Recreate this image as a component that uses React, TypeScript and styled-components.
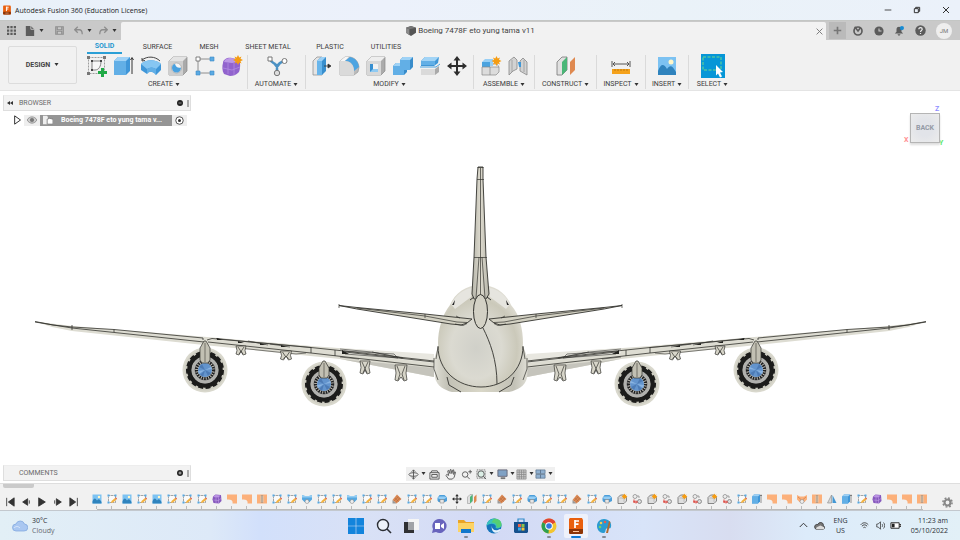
import React from 'react';
import styled, { createGlobalStyle, css } from 'styled-components';

const GlobalStyle = createGlobalStyle`
  *, *::before, *::after { box-sizing: border-box; }
  html, body { margin: 0; padding: 0; }
  body { font-family: Roboto, "Liberation Sans", Arial, sans-serif; font-size: 7px; line-height: 9px; color: #3c3c3c; background: #fff; }
  button { font: inherit; color: inherit; border: 0; padding: 0; margin: 0; background: none; cursor: pointer; }
  h1, h2, p, ul, ol { margin: 0; padding: 0; font: inherit; list-style: none; }
  svg { display: block; }
`;

/* ---------- window shell ---------- */

const Shell = styled.div`
  min-height: 100vh;
  display: flex;
  flex-direction: column;
`;

const TitleBar = styled.header`
  display: flex;
  align-items: center;
  height: 20px;
  padding-left: 2px;
  gap: 3px;
  background: linear-gradient(90deg, #e9f1f9, #ecf1fb 40%, #eaf2f8 70%, #ebf1fa);
  color: #1b1b1b;
  font-family: "Open Sans", "Noto Sans", sans-serif;
`;

const AppTitle = styled.h1`
  flex: 1;
`;

const WindowButtons = styled.div`
  display: flex;
`;

const WindowButton = styled.button`
  width: 29px;
  height: 20px;
  display: grid;
  place-items: center;
`;

const TabStrip = styled.div`
  display: flex;
  align-items: flex-end;
  height: 20px;
  background: #c9c9c9;
  border-top: 1px solid #c4c6c4;
`;

const QuickBar = styled.div`
  width: 121px;
  height: 19px;
  display: flex;
  align-items: center;
  padding-left: 3px;
`;

const QuickButton = styled.button<{ $w: number; $dim?: boolean }>`
  width: ${(p) => p.$w}px;
  height: 17px;
  display: flex;
  align-items: center;
  justify-content: center;
  gap: 4px;
  color: ${(p) => (p.$dim ? '#8d8d8d' : '#5c5c5c')};
`;

const DocumentTab = styled.div`
  flex: 1;
  height: 18px;
  display: flex;
  align-items: center;
  background: #f2f2f2;
  border-radius: 2px 2px 0 0;
`;

const DocumentName = styled.div`
  flex: 1;
  display: flex;
  align-items: center;
  justify-content: center;
  gap: 2px;
  padding-left: 8px;
  font-size: 8px;
  line-height: 10px;
  color: #444;
`;

const CloseTab = styled.button`
  width: 14px;
  height: 16px;
  display: grid;
  place-items: center;
  color: #777;
`;

const AccountBar = styled.div`
  display: flex;
  align-items: center;
  width: 134px;
  height: 19px;
  padding-left: 3px;
`;

const AccountButton = styled.button<{ $w: number; $tab?: boolean }>`
  width: ${(p) => p.$w}px;
  height: 17px;
  display: grid;
  place-items: center;
  color: #5b5b5b;
  background: ${(p) => (p.$tab ? '#bababa' : 'transparent')};
`;

const Avatar = styled.button`
  width: 16px;
  height: 16px;
  margin-left: 6px;
  border-radius: 50%;
  background: #eee;
  color: #777;
  font-size: 6px;
  line-height: 16px;
  text-align: center;
`;

/* ---------- ribbon ---------- */

const Ribbon = styled.section`
  display: flex;
  background: #f1f1f1;
  border-bottom: 1px solid #e4e4e4;
  height: 51px;
  padding-left: 8px;
`;

const WorkspaceButton = styled.button`
  width: 69px;
  height: 38px;
  margin-top: 6px;
  border: 1px solid #dcdcdc;
  border-radius: 2px;
  display: flex;
  align-items: center;
  justify-content: center;
  gap: 4px;
  font-weight: 700;
  color: #444;
`;

const RibbonBody = styled.div`
  flex: 1;
  padding-left: 4px;
`;

const RibbonTabs = styled.div`
  display: flex;
  height: 14px;
  padding-left: 6px;
`;

const RibbonTab = styled.button<{ $w: number; $active?: boolean }>`
  width: ${(p) => p.$w}px;
  height: 14px;
  text-align: center;
  ${(p) =>
    p.$active &&
    css`
      color: #1f97cf;
      font-weight: 700;
      border-bottom: 2px solid #2a9fd6;
    `}
`;

const Groups = styled.div`
  display: flex;
`;

const Group = styled.div<{ $w: number }>`
  width: ${(p) => p.$w}px;
  margin-top: 1px;
  height: 34px;
  display: flex;
  flex-direction: column;
  align-items: center;
  & + & {
    border-left: 1px solid #dadada;
  }
`;

const GroupTools = styled.div`
  display: flex;
`;

const ToolButton = styled.button<{ $selected?: boolean }>`
  width: ${(p) => (p.$selected ? 24 : 27)}px;
  height: 24px;
  margin-top: -1px;
  display: grid;
  place-items: center;
  background: ${(p) => (p.$selected ? '#0696d7' : 'transparent')};
`;

const GroupLabel = styled.button`
  display: flex;
  align-items: center;
  gap: 2px;
  height: 9px;
  white-space: nowrap;
  margin-top: auto;
`;

/* ---------- canvas ---------- */

const Viewport = styled.main`
  flex: 1;
  position: relative;
  display: flex;
  flex-direction: column;
  justify-content: space-between;
  padding: 4px 3px 2px;
  background: #fff;
`;

const ModelLayer = styled.svg`
  position: absolute;
  inset: 0;
  width: 100%;
  height: 100%;
`;

const Browser = styled.aside`
  position: relative;
  width: 188px;
`;

const PanelHead = styled.div`
  position: relative;
  width: 188px;
  height: 16px;
  display: flex;
  align-items: center;
  padding: 0 1px 0 3px;
  background: #f2f2f2;
  border: 1px solid #dedede;
  border-top-color: #ededed;
  color: #6a6a6a;
`;

const PanelTitle = styled.h2`
  flex: 1;
  padding-left: 5px;
`;

const PanelArrow = styled.button`
  width: 7px;
`;

const PanelToggle = styled.button`
  width: 8px;
  height: 12px;
  display: grid;
  place-items: center;
  margin-right: 3px;
`;

const Grip = styled.span`
  width: 2px;
  height: 7px;
  border: 1px solid #aaa;
  border-width: 0 1px;
`;

const TreeRow = styled.div`
  display: flex;
  align-items: center;
  height: 12px;
  margin: 3px 0 0 8px;
`;

const TreeButton = styled.button<{ $w: number; $shade?: boolean }>`
  width: ${(p) => p.$w}px;
  height: 11px;
  display: grid;
  place-items: center;
  background: ${(p) => (p.$shade ? '#eee' : 'transparent')};
`;

const TreeItem = styled.button`
  width: 132px;
  height: 11px;
  display: flex;
  align-items: center;
  gap: 8px;
  padding-left: 3px;
  background: #959595;
  color: #fff;
  font-weight: 700;
  white-space: nowrap;
`;

const ViewCube = styled.div`
  position: absolute;
  top: 13px;
  right: 14px;
  width: 44px;
  height: 44px;
`;

const CubeFace = styled.button`
  position: absolute;
  left: 8px;
  top: 9px;
  width: 30px;
  height: 30px;
  border: 1px solid #b5b5b5;
  background: radial-gradient(#e2e4e9 40%, #ececec);
  box-shadow: 0 2px 2px #ddd;
  color: #949aa5;
  font-weight: 700;
`;

const Axis = styled.span<{ $x: number; $y: number; $c: string }>`
  position: absolute;
  left: ${(p) => p.$x}px;
  top: ${(p) => p.$y}px;
  color: ${(p) => p.$c};
  font-weight: 700;
`;

const BottomRow = styled.div`
  position: relative;
  display: grid;
  grid-template-columns: 1fr auto 1fr;
  align-items: center;
`;

const NavBar = styled.nav`
  display: flex;
  height: 14px;
  background: #f0f0f0;
  padding: 0 1px;
  margin-top: 2px;
`;

const NavButton = styled.button<{ $w: number }>`
  width: ${(p) => p.$w}px;
  height: 14px;
  display: flex;
  align-items: center;
  justify-content: center;
  gap: 2px;
`;

/* ---------- timeline ---------- */

const Timeline = styled.section`
  position: relative;
  height: 28px;
  display: flex;
  background: #f1f1f1;
  border-top: 1px solid #dedede;
  border-bottom: 1px solid #c3c8ce;
`;

const ScrollThumb = styled.div`
  position: absolute;
  left: 3px;
  top: 0;
  width: 31px;
  height: 4px;
  border-radius: 0 0 2px 2px;
  background: #cacaca;
`;

const Playback = styled.div`
  display: flex;
  width: 89px;
  padding: 11px 0 0 2px;
`;

const PlayButton = styled.button`
  width: 16px;
  height: 14px;
  display: grid;
  place-items: center;
`;

const Features = styled.ol`
  display: flex;
  flex: 0 1 840px;
  margin-top: 9px;
  height: 17px;
  background: linear-gradient(#bbb, #bbb) 8px 100% / calc(100% - 14px) 1px no-repeat;
`;

const Feature = styled.li`
  flex: 1;
  display: flex;
  flex-direction: column;
  align-items: center;
  &::after {
    content: '';
    width: 1px;
    height: 3px;
    margin-top: 1px;
    background: #bbb;
  }
`;

const FeatureButton = styled.button`
  width: 10px;
  height: 12px;
`;

const SettingsButton = styled.button`
  width: 14px;
  height: 14px;
  margin: 11px 6px 0 auto;
  display: grid;
  place-items: center;
`;

/* ---------- taskbar ---------- */

const Taskbar = styled.footer`
  height: 29px;
  display: grid;
  grid-template-columns: 1fr 275px 1fr;
  align-items: center;
  background: linear-gradient(90deg, #e2eff6 0%, #dde9f8 22%, #d2e0fb 27%, #d9e1f6 38%, #d3daf5 52%, #d8e4f9 67%, #d8ddf0 76%, #dcebfa 84%, #e2f0f7 100%);
  color: #2b2f36;
  font-family: "Open Sans", "Noto Sans", sans-serif;
`;

const Weather = styled.button`
  display: flex;
  align-items: center;
  gap: 4px;
  margin-left: 12px;
  justify-self: start;
  text-align: left;
  line-height: 10px;
`;

const Line = styled.span<{ $muted?: boolean }>`
  display: block;
  color: ${(p) => (p.$muted ? '#666b73' : 'inherit')};
`;

const Apps = styled.div`
  display: grid;
  grid-template-columns: repeat(10, 1fr);
  justify-items: center;
`;

const AppButton = styled.button<{ $active?: boolean; $running?: boolean }>`
  position: relative;
  width: 24px;
  height: 24px;
  display: grid;
  place-items: center;
  border-radius: 2px;
  background: ${(p) => (p.$active ? '#eef1fb' : 'transparent')};
  ${(p) =>
    (p.$active || p.$running) &&
    css`
      &::after {
        content: '';
        position: absolute;
        bottom: 0;
        width: ${p.$active ? 10 : 4}px;
        height: 2px;
        border-radius: 1px;
        background: ${p.$active ? '#0f78d4' : '#868b96'};
      }
    `}
`;

const Tray = styled.div`
  display: flex;
  align-items: center;
  justify-self: end;
  padding-right: 12px;
  line-height: 10px;
`;

const TrayButton = styled.button<{ $w: number; $right?: boolean }>`
  width: ${(p) => p.$w}px;
  display: grid;
  justify-items: ${(p) => (p.$right ? 'end' : 'center')};
`;

/* ---------- icons ---------- */

const Caret = () => (
  <svg width="5" height="4" viewBox="0 0 5 4" aria-hidden="true">
    <path d="M0.500 0h4L2.500 3z" fill="#333" />
  </svg>
);

const star = (x: number, y: number, r: number) => (
  <g transform={`translate(${x} ${y}) scale(${r})`}>
    <path d="M0-1L.25-.5.7-.7.5-.25 1 0 .5.25.7.7.25.5 0 1-.25.5-.7.7-.5.25-1 0-.5-.25-.7-.7-.25-.5z" fill="#f59c12" />
  </g>
);

const shapes: Record<string, React.ReactNode> = {
  sketchNew: (
    <>
      <path d="M1.500 1.500h16v16h-16z" fill="none" stroke="#888" strokeWidth=".8" strokeDasharray="2 1" />
      <path d="M0 0h3v3H0zM16 0h3v3h-3zM0 16h3v3H0z" fill="#777" />
      <path d="M5 5v9h3c4 0 6-4 6-9z" fill="#f8f8f8" stroke="#666" strokeWidth=".8" />
      <path d="M4 4h2v2H4zM13 4h2v2h-2zM4 13h2v2H4z" fill="#444" />
      <path d="M14 12h3v3h3v3h-3v3h-3v-3h-3v-3h3z" fill="#20aa46" />
    </>
  ),
  extrude: (
    <>
      <path d="M0 5l4-4h12v14l-4 4H0z" fill="#3f96d8" />
      <path d="M0 5l4-4h12l-4 4z" fill="#9fd2f6" />
      <path d="M0 5h12v14H0z" fill="#62afe6" />
      <path d="M18 18V2M16.500 4L18 1.500 19.500 4" fill="none" stroke="#333" />
    </>
  ),
  revolve: (
    <>
      <path d="M0 8c5-5 15-5 20 0v6l-5 5c-3-4-7-4-9-1l-6-4z" fill="#3f96d8" />
      <path d="M0 8c5-5 15-5 20 0l-5 5c-3-2-6-2-9 0z" fill="#86c6f2" />
      <path d="M6 13c3-2 6-2 9 0v6c-3-4-7-4-9-1z" fill="#62afe6" />
      <path d="M1 4c5-4 13-4 18 1M1 5V2M1 5l3-.5" fill="none" stroke="#444" />
    </>
  ),
  hole: (
    <>
      <path d="M1 5l4-4h14v14l-4 4H1z" fill="#aaa" stroke="#888" strokeWidth=".7" />
      <path d="M1 5l4-4h14l-4 4z" fill="#e4e4e4" />
      <path d="M1 5h14v14H1z" fill="#cfcfcf" />
      <circle cx="8.500" cy="12" r="5" fill="#f5f5f5" stroke="#999" strokeWidth=".6" />
      <path d="M7 8c1 4 4 4 6 3.500 0 3-2 5-4.500 5S4 14.500 4 12s1.500-4 3-4z" fill="#4aa1df" />
    </>
  ),
  pattern: (
    <>
      <path d="M3 3h14M3 3v14h14" fill="none" stroke="#777" strokeWidth=".8" />
      <path d="M1 1h4v4H1z" fill="#fff" stroke="#666" strokeWidth=".8" />
      <path d="M15 1h4v4h-4zM1 15h4v4H1zM15 15h4v4h-4z" fill="#5aaae3" stroke="#3c8cc8" strokeWidth=".6" />
    </>
  ),
  form: (
    <>
      <path d="M1 7c0-4 5-6 9-5l7 2c2 3 1 10 0 12-3 3-6 4-9 4l-6-2C0 15 0 10 1 7z" fill="#9163cd" />
      <path d="M3 4c4-3 9-2 13 0-2 2-4 3-6 3L2 6z" fill="#bc98e6" />
      <path d="M1 12l9 2 8-3M6 7v11M12 7v12" fill="none" stroke="#b590e4" strokeWidth=".7" />
      {star(16, 4, 5)}
    </>
  ),
  automate: (
    <>
      <path d="M3 3c1 4 5 4 7 7 2-3 4-4 7-5M10 10v6M7 7l3 4 3-4" fill="none" stroke="#4a91c4" strokeWidth="2.500" />
      <path d="M1 1h4v4H1z" fill="#fff" stroke="#777" />
      <circle cx="17.500" cy="5" r="2.500" fill="#fff" stroke="#777" />
      <circle cx="10" cy="17" r="2.700" fill="#ddd" stroke="#777" />
    </>
  ),
  press: (
    <>
      <path d="M1 5l4-4h5v18H1z" fill="#e4e4e4" stroke="#888" strokeWidth=".7" />
      <path d="M5 5l4-4h5v14l-4 4H5z" fill="#388fce" />
      <path d="M5 5l4-4h5l-4 4z" fill="#9bd0f5" />
      <path d="M5 5h5v14H5z" fill="#68b5eb" />
      <path d="M12 10h6M16 8l3 2-3 2z" fill="#333" stroke="#333" strokeWidth=".8" />
    </>
  ),
  fillet: (
    <>
      <path d="M1 5l5-4h5c5 1 8 4 9 10l-1 5-4 3H1z" fill="#bbb" stroke="#999" strokeWidth=".7" />
      <path d="M1 5l5-4h4L6 5z" fill="#f6f6f6" />
      <path d="M6 5l5-4c5 1 8 4 9 10l-5 4C15 8 11 5 6 5z" fill="#4da4e1" />
      <path d="M1 5h5c5 0 9 4 9 10v4H1z" fill="#dadada" />
    </>
  ),
  shell: (
    <>
      <path d="M1 5l4-4h14v14l-4 4H1z" fill="#ababab" stroke="#888" strokeWidth=".7" />
      <path d="M1 5l4-4h14l-4 4z" fill="#eee" />
      <path d="M1 5h14v14H1z" fill="#d8d8d8" />
      <path d="M4 8h8v8H4z" fill="#f3f3f3" />
      <path d="M4 8h3v5h5v3H4z" fill="#378fd0" />
      <path d="M4 16l3-3h5v3z" fill="#8fcaf2" />
    </>
  ),
  combine: (
    <>
      <path d="M7 4l3-3h10v10l-3 3h-3v2l-3 3H0v-9l3-3h4z" fill="#388cca" />
      <path d="M7 4l3-3h10l-3 3zM0 10l3-3h4v3z" fill="#9ed2f6" />
      <path d="M7 4h10v10h-6v5H0v-9h7z" fill="#62afe6" />
    </>
  ),
  offset: (
    <>
      <path d="M1 5l4-4h14l-1 6-4 3H1z" fill="#3f96d6" />
      <path d="M1 5l4-4h14l-4 4z" fill="#a2d4f6" />
      <path d="M1 5h14v4H1z" fill="#62afe6" />
      <path d="M0 11h16l4-3" fill="none" stroke="#4ca3df" />
      <path d="M1 13h14l4-3v6l-4 3H1z" fill="#aaa" />
      <path d="M1 13h14v6H1z" fill="#dadada" />
    </>
  ),
  move: (
    <path d="M10 0l3.500 4.500H11V9h4.500V6.500L20 10l-4.500 3.500V11H11v4.500h2.500L10 20l-3.500-4.500H9V11H4.500v2.500L0 10l4.500-3.500V9H9V4.500H6.500z" fill="#2d2d2d" />
  ),
  component: (
    <>
      <path d="M1 6l3-3h8v7H1z" fill="#98cff5" />
      <path d="M1 6h8v5H1z" fill="#4ba3df" />
      <path d="M1 11h17v5l-3 3H1z" fill="#dcdcdc" stroke="#888" strokeWidth=".7" />
      <path d="M9 11v8M12 8h4l2 3" fill="none" stroke="#888" strokeWidth=".7" />
      {star(15.5, 5, 5)}
    </>
  ),
  joint: (
    <>
      <path d="M1 5l5-4 3 3v9l-4 2-4 4z" fill="#d2d2d2" stroke="#888" strokeWidth=".8" />
      <path d="M19 19l-7-4V5l3-3 4 4z" fill="#d2d2d2" stroke="#888" strokeWidth=".8" />
      <path d="M4 4v12M16 4v12" stroke="#999" strokeWidth=".8" />
      <path d="M10 6h3v5h-2z" fill="#4097d6" />
    </>
  ),
  construct: (
    <>
      <path d="M1 6l5-5h5v13l-5 5H1z" fill="#e0e0e0" stroke="#777" strokeWidth=".8" />
      <path d="M6 6l5-5v13l-5 5z" fill="#49b677" />
      <path d="M14 6l5-5v13l-5 5z" fill="#df8950" />
    </>
  ),
  measure: (
    <>
      <path d="M1 5v6M19 5v6M2 8h16M4 6L2 8l2 2M16 6l2 2-2 2" fill="none" stroke="#555" />
      <path d="M1 13h18v5H1z" fill="#f5a21b" />
      <path d="M4 13v2M7 13v2M10 13v2M13 13v2M16 13v2" stroke="#a6690a" strokeWidth=".7" />
    </>
  ),
  image: (
    <>
      <path d="M1 1h18v18H1z" fill="#7cc2f2" />
      <path d="M1 15c3-8 6-7 9-2 3-4 5-4 9 3v3H1z" fill="#2f83bd" />
      <circle cx="14" cy="6" r="2.500" fill="#fff6c9" />
    </>
  ),
  select: (
    <>
      <path d="M0 1h18v13H0z" fill="none" stroke="#6fdb8a" strokeDasharray="3 1.500" />
      <path d="M13 9l7 7-3 .5 2 4-2 1-2-4-2 2z" fill="#fff" />
    </>
  ),
  sketch: (
    <>
      <path d="M3 3h14v14H3z" fill="#fafafa" stroke="#777" strokeWidth="1.300" strokeDasharray="4 1" />
      <path d="M1 1h4v4H1zM15 1h4v4h-4zM1 15h4v4H1z" fill="#56a9e4" />
      <path d="M8 18l1-4 7-6 3 3-7 6z" fill="#f3b13e" />
      <path d="M16 8l3 3 1-2-2-2z" fill="#e34f45" />
    </>
  ),
  elbow: <path d="M0 1h20v18h-9c1-5-1-8-11-8z" fill="#fcb07a" />,
  ladder: (
    <>
      <path d="M0 1h20v18H0z" fill="#fcb07a" />
      <path d="M7 3h6v14H7z" fill="#fde3c6" />
      <path d="M7.500 4h5M7.500 8h5M7.500 12h5M7.500 16h5" stroke="#555" strokeWidth="1.500" />
    </>
  ),
  loft: (
    <>
      <path d="M0 2l6 2h8l6-2v9l-5 5H5l-5-5z" fill="#57a9e1" />
      <path d="M0 2l6 2h8l6-2v5H0z" fill="#95cef4" />
      <circle cx="10" cy="15" r="4" fill="#eee" stroke="#777" />
    </>
  ),
  loftWarm: (
    <>
      <path d="M0 2l6 3h8l6-3v9l-5 5H5l-5-5z" fill="#fcb07a" />
      <path d="M2 6l6 5M18 6l-6 5" stroke="#b96b37" />
      <circle cx="10" cy="15" r="4" fill="#eee" stroke="#777" />
    </>
  ),
  plane: (
    <>
      <path d="M1 12L10 1l9 9-10 9z" fill="#d98752" />
      <path d="M1 12l8 7H1z" fill="#9a9a9a" />
      <path d="M6 8l8 8M10 5l7 7M4 14l9-9M7 17l9-9" stroke="#a86338" strokeWidth=".8" />
    </>
  ),
  sweep: (
    <>
      <path d="M1 8l4-6h10l5 5v7l-4 2H3l-2-3z" fill="#4c9eda" />
      <path d="M1 8l4-3h10l4 2-4 3H5z" fill="#94cdf4" />
      <path d="M6 11h8v7H6z" fill="#e6e6e6" stroke="#777" />
    </>
  ),
  body: (
    <>
      <path d="M2 7l5-5h8l4 5v7l-5 5H2z" fill="#dedede" stroke="#666" strokeWidth="1.500" />
      <path d="M5 8h9v8" fill="none" stroke="#999" />
      {star(15, 5, 6)}
    </>
  ),
  link: (
    <>
      <circle cx="6" cy="5" r="4" fill="#eee" stroke="#888" strokeWidth="1.500" />
      <path d="M10 4h4v4" fill="none" stroke="#888" strokeWidth="1.500" />
      <circle cx="15" cy="15" r="4" fill="#ddd" stroke="#777" strokeWidth="1.500" />
      <path d="M4 11v5h6M2 16h5M8 13l3 3-3 3" fill="none" stroke="#db3c35" strokeWidth="2" />
    </>
  ),
  mirror: (
    <>
      <path d="M9 2v16H1z" fill="#d6d6d6" stroke="#777" />
      <path d="M11 2v16h8z" fill="#4397d4" />
    </>
  ),
  solidForm: (
    <>
      <path d="M2 5l5-4 11 1 1 12-5 5-11-1-2-7z" fill="#8658bd" />
      <path d="M2 6l5-4 10 1-4 4z" fill="#bc94e5" />
      <path d="M3 12l10 1 5-4M8 6v13M13 7v12" stroke="#c9aae9" fill="none" />
    </>
  ),
};

const Glyph = ({ name, size }: { name: string; size: number }) => (
  <svg width={size} height={size} viewBox="0 0 20 20" overflow="visible" aria-hidden="true">
    {shapes[name]}
  </svg>
);

const FusionMark = ({ size }: { size: number }) => (
  <svg width={size} height={size} viewBox="0 0 18 18" aria-hidden="true">
    <path d="M3 1h12l1 2v13l-1 1H3l-1-1V2z" fill="#e95f0e" />
    <path d="M2 12h14v4l-1 1H3l-1-1z" fill="#8c3407" />
    <path d="M8 3v8M8 4h4M8 7.200h3.500" fill="none" stroke="#fff" strokeWidth="1.700" />
    <path d="M6 14h6v1H6z" fill="#ffc69e" />
  </svg>
);

/* ---------- aircraft ---------- */

const Engine = ({ x, y, top, pylon }: { x: number; y: number; top: number; pylon: number }) => (
  <g>
    <circle cx={x} cy={y} r="22.500" fill="#d9d8cd" />
    <circle cx={x} cy={y} r="20.500" fill="#cfcec3" />
    <circle cx={x} cy={y} r="15.500" fill="none" stroke="#1c1c1b" strokeWidth="4.500" />
    <circle cx={x} cy={y} r="18" fill="none" stroke="#1c1c1b" strokeWidth="2" strokeDasharray="5 2.500" />
    <circle cx={x} cy={y} r="13.500" fill="#b1b1ae" />
    <circle cx={x} cy={y} r="10" fill="#ccc9bf" stroke="#444" strokeWidth=".6" />
    <circle cx={x} cy={y} r="8.500" fill="none" stroke="#1d1e20" strokeWidth="3" strokeDasharray="1.600 .9" />
    <circle cx={x} cy={y} r="7" fill="#6394cd" />
    <path d={`M${x} ${y}l-6-3 3-3zM${x} ${y}l6 3-3 3zM${x} ${y}l-2 7-3-2z`} fill="#3f6ba6" opacity=".6" />
    <path d={`M${x} ${y}l-7 1 1 3zM${x} ${y}l6-3 1 2z`} fill="#8ab4e2" />
    <path d={`M${x - 1} ${top}h2l4 7v${pylon - 10}l-2 3h-6l-2-3v-${pylon - 10}z`} fill="#c2c0b3" stroke="#33332f" strokeWidth=".7" />
    <path d={`M${x} ${top + 2}v${pylon - 3}`} stroke="#504f49" strokeWidth=".7" />
  </g>
);

const Fairing = ({ x, y, w, h }: { x: number; y: number; w: number; h: number }) => (
  <g fill="#d7d5c9" stroke="#33332f" strokeWidth=".7">
    <path d={`M${x - w / 2} ${y}h${w}l-1 ${h / 2} 1 ${h / 2 - 1}-3 1-${w / 2 - 3}-4-${w / 2 - 3} 4-3-1 1-${h / 2 - 1}z`} />
    <path d={`M${x - w / 2 + 2} ${y + 1}l3 ${h / 2}-2 ${h / 2 - 2}M${x + w / 2 - 2} ${y + 1}l-3 ${h / 2} 2 ${h / 2 - 2}`} fill="none" />
  </g>
);

const HalfWing = () => (
  <g>
    <path d="M35 321.500L72 326l135 11 104 9 123 9v22l-94-18-136-14-132-14-20-4z" fill="#dddcd2" />
    <path d="M340 359l94 9v9z" fill="#c5c4bc" />
    <path d="M340 348l94 6v9l-94-10z" fill="#e8e7e0" />
    <g fill="none" stroke="#33332f" strokeWidth=".8">
      <path d="M35 321.500l18 3.500 19 2 42 2.500M114 329.500l89 8.500v2M35 322l37 6 132 14M114 329.500v2.500M72 325v5" />
      <path d="M207 340l5-1.500 99 9 24 2.500 99 11M208 342l103 11 123 14M311 347v6M335 350v6M345 352l89 10" />
      <path d="M216 338.500l30 3 65 6M248 341l20 4M270 344l20 3M340 349l32 3 31 6M345 354l53 4-4-4-50-3M372 352l30 6M239 348l57 6 10-1M340 357l19 2" strokeWidth=".6" />
    </g>
    <path d="M217 338l6 2h-6zM238 341l6 2h-6zM260 343l6 2h-6zM281 345l6 2h-6zM342 350l7 4h-7z" fill="#22221f" />
    <Fairing x={241} y={346} w={10} h={9} />
    <Fairing x={286} y={351} w={11} h={9} />
    <Fairing x={365} y={361} w={10} h={13} />
    <Fairing x={401} y={365} w={12} h={16} />
    <Engine x={205} y={370} top={341} pylon={22} />
    <Engine x={324} y={384} top={361} pylon={17} />
  </g>
);

const HalfTail = () => (
  <g fill="#d3d1c3" stroke="#33332f" strokeWidth=".9">
    <path d="M339 305.500l18 2 68 6.500 47 5-5 4-6 2-10-1-94-15z" />
    <path d="M357 308l68 8 32 6 10 .5M425 314v4M456 316l4 2M455 324l8 1.500 4-2M339 304v4" fill="none" strokeWidth=".7" />
  </g>
);

const mirrored = 'matrix(-1 0 0 1 961 0)';

const Aircraft = () => (
  <ModelLayer viewBox="0 91 960 392" role="img" aria-label="Boeing 747-8F, back view">
    <defs>
      <radialGradient id="hull" cx=".45" cy=".62" r=".6">
        <stop offset="0" stopColor="#d0d0c9" />
        <stop offset=".5" stopColor="#dbdad1" />
        <stop offset=".8" stopColor="#cbc9ba" />
        <stop offset="1" stopColor="#dedcd2" />
      </radialGradient>
      <linearGradient id="belly" x1="0" x2="1">
        <stop offset="0" stopColor="#e0dfd6" />
        <stop offset=".15" stopColor="#c2c1b6" />
        <stop offset=".5" stopColor="#d9d7c8" />
        <stop offset=".85" stopColor="#c2c1b6" />
        <stop offset="1" stopColor="#e0dfd6" />
      </linearGradient>
      <linearGradient id="fin" x1="0" x2="1">
        <stop offset="0" stopColor="#b5b4a9" />
        <stop offset=".5" stopColor="#dddace" />
        <stop offset="1" stopColor="#b5b4a9" />
      </linearGradient>
    </defs>
    <HalfWing />
    <g transform={mirrored}><HalfWing /></g>
    <path d="M438 347l-4 12 1 19c2 8 9 12 17 14h57c9-2 16-6 18-14l1-19-5-13z" fill="url(#belly)" />
    <path d="M480 285c15 0 26 8 31 20 9 10 12 25 12 38 0 27-18 44-42 44s-43-17-43-44c0-13 4-28 12-38 5-12 16-20 30-20z" fill="url(#hull)" />
    <path d="M451 304c5-9 12-15 21-16l-1 9-16 12zM510 304c-5-9-12-15-21-16l1 9 16 12z" fill="#e6e5df" />
    <g fill="none" stroke="#33332f" strokeWidth=".9">
      <path d="M438 346c0 25 20 41 43 41s42-16 42-41M447 377l2 8 12 7M514 377l-3 8-12 7M483 328c7 14 14 32 14 56" />
      <path d="M434 358v11l4 11M527 358v11l-4 11M438 347l-2 12M523 347l2 12" strokeWidth=".7" />
    </g>
    <path d="M452 305l3-5-1 5zM509 305l-3-5 1 5z" fill="#222" />
    <HalfTail />
    <g transform={mirrored}><HalfTail /></g>
    <path d="M478 167h5v12l3 78 3 37-3 5h-12l-2-5 2-37 3-78z" fill="url(#fin)" stroke="#33332f" strokeWidth=".9" />
    <path d="M477.500 167.500h6M477 179.500h7M474 257.500h13M480.500 168v131M479 257l-3 41M482 257l3 41" fill="none" stroke="#33332f" strokeWidth=".7" />
    <path d="M474 297l-4 3M487 297l4 3" stroke="#333" />
    <ellipse cx="480.500" cy="311.500" rx="7" ry="17" fill="#d3d1c5" stroke="#33332f" />
  </ModelLayer>
);

/* ---------- data ---------- */

const ribbonTabs = [
  { name: 'SOLID', w: 35 },
  { name: 'SURFACE', w: 71 },
  { name: 'MESH', w: 32 },
  { name: 'SHEET METAL', w: 86 },
  { name: 'PLASTIC', w: 38 },
  { name: 'UTILITIES', w: 74 },
];

const groups = [
  { name: 'CREATE', w: 166, tools: ['sketchNew', 'extrude', 'revolve', 'hole', 'pattern', 'form'] },
  { name: 'AUTOMATE', w: 58, tools: ['automate'] },
  { name: 'MODIFY', w: 168, tools: ['press', 'fillet', 'shell', 'combine', 'offset', 'move'] },
  { name: 'ASSEMBLE', w: 61, tools: ['component', 'joint'] },
  { name: 'CONSTRUCT', w: 62, tools: ['construct'] },
  { name: 'INSPECT', w: 49, tools: ['measure'] },
  { name: 'INSERT', w: 43, tools: ['image'] },
  { name: 'SELECT', w: 48, tools: ['select'] },
];

const features = (
  'image sketch image sketch image sketch sketch sketch solidForm elbow elbow ladder sketch sketch loft sketch sketch loft ' +
  'sketch sketch plane sketch sketch sweep move construct sketch plane sketch sweep sketch sketch plane sketch sweep ' +
  'body link body link body link body link sketch extrude elbow elbow loftWarm ladder mirror extrude sketch solidForm elbow elbow ladder'
).split(' ');

const playback = [
  { name: 'Go to start', d: 'M2 1v10M11 1v10L4 6z' },
  { name: 'Step back', d: 'M8 2v8L2 6zM10 4v4' },
  { name: 'Play', d: 'M2 1v10l8-5z' },
  { name: 'Step forward', d: 'M4 2v8l6-4zM2 4v4' },
  { name: 'Go to end', d: 'M1 1v10l7-5zM10 1v10' },
];

const line = { fill: 'none', stroke: '#555', strokeWidth: 1 };

const navTools = [
  { name: 'Orbit', w: 20, caret: true, art: <g {...line}><path d="M6 1v10M4 3l2-2 2 2M4 9l2 2 2-2" /><ellipse cx="6" cy="6" rx="5" ry="2" /></g> },
  { name: 'Look at', w: 15, art: <g {...line}><path d="M1 4h10v7H1zM2 4l1-2h6l1 2M3 6h6v3H3z" /></g> },
  { name: 'Pan', w: 17, art: <path {...line} d="M4 11L1 7l1-1 2 1-1-5 1-.5L5.500 5V1l1-.5L7.500 5l1-4h1v5l1-3 1 .5L10 9l-2 2z" /> },
  { name: 'Zoom', w: 15, art: <g {...line}><circle cx="4.500" cy="6" r="3" /><path d="M6.500 8l3 3M8 3h4M10 1v4" /></g> },
  { name: 'Zoom window', w: 23, caret: true, art: <g {...line}><path d="M1 1h9v9H1z" strokeDasharray="1 1" /><circle cx="5.500" cy="5.500" r="3.500" fill="#dceee6" /><path d="M8 8l3 3" /></g> },
  { name: 'Display settings', w: 19, caret: true, art: <g><path d="M1 1h10v7H1z" fill="#7fa1c4" stroke="#667" /><path d="M4 10h5" stroke="#777" strokeWidth="2" /></g> },
  { name: 'Grid and snaps', w: 19, caret: true, art: <path d="M1 1h10v10H1zM3.500 1v10M6 1v10M8.500 1v10M1 3.500h10M1 6h10M1 8.500h10" fill="#ccc" stroke="#888" strokeWidth=".8" /> },
  { name: 'Viewports', w: 19, caret: true, art: <path d="M1 1h5v4H1zM6 1h5v4H6zM1 6h5v4H1zM6 6h5v4H6z" fill="#8fb0d0" stroke="#5d7690" strokeWidth=".8" /> },
];

const Art = ({ size = 12, children }: { size?: number; children: React.ReactNode }) => (
  <svg width={size} height={size} viewBox="0 0 12 12" aria-hidden="true">{children}</svg>
);

const Pic = ({ children }: { children: React.ReactNode }) => (
  <svg width="16" height="16" viewBox="0 0 16 16" aria-hidden="true">{children}</svg>
);

const apps: { name: string; running?: boolean; active?: boolean; art: React.ReactNode }[] = [
  { name: 'Start', art: <Pic><path d="M0 0h7.700v7.700H0zM8.300 0H16v7.700H8.300zM0 8.300h7.700V16H0zM8.300 8.300H16V16H8.300z" fill="#1384dc" /></Pic> },
  { name: 'Search', art: <Pic><circle cx="7" cy="7" r="5.500" fill="#edf2fa" stroke="#2a2d33" strokeWidth="1.400" /><path d="M11 11l4 4" stroke="#2a2d33" strokeWidth="1.600" /></Pic> },
  { name: 'Task view', art: <Pic><path d="M5 1h11v11H5z" fill="#f5f5f5" /><path d="M1 4h10v11H1z" fill="#2f3033" /><path d="M5 4h6v8H5z" fill="#a1a3a7" /></Pic> },
  { name: 'Chat', art: <Pic><path d="M8 1a7 7 0 1 1-3 13l-4 1 1-4A7 7 0 0 1 8 1z" fill="#6864bd" /><path d="M4 5h5v6H4zM10 7l3-2v6l-3-2z" fill="#fff" /></Pic> },
  { name: 'File Explorer', running: true, art: <Pic><path d="M0 2h6l2 2h8v10H0z" fill="#e9a426" /><path d="M0 5h16v9H0z" fill="#fcd365" /><path d="M3 11h10v4H3z" fill="#1277cc" /></Pic> },
  { name: 'Edge', art: <Pic><circle cx="8" cy="8" r="7.500" fill="#1674bb" /><path d="M.5 8C1-2 16-1 15.500 7c0 3-4 4-6 3 2-4-5-6-9-2z" fill="#39c3bd" /><path d="M8 .5c5 0 8 3 7.500 7-1 2-3 2-5 2 1-4-2-5-5-5z" fill="#55ce74" /><path d="M6 7c-1 4 3 7 8 4l1 0c-2 6-11 5-9-4z" fill="#e4f0fb" /></Pic> },
  { name: 'Microsoft Store', art: <Pic><path d="M1 4h14v10l-1 1H2l-1-1z" fill="#16508c" /><path d="M5 4V1h6v3" fill="none" stroke="#318bc9" strokeWidth="1.200" /><path d="M5 6h3v3H5z" fill="#ed6246" /><path d="M8.500 6h3v3h-3z" fill="#8bc34a" /><path d="M5 9.500h3v3H5z" fill="#35a9ed" /><path d="M8.500 9.500h3v3h-3z" fill="#f6c63c" /></Pic> },
  { name: 'Chrome', running: true, art: <Pic><circle cx="8" cy="8" r="7.500" fill="#f2c52f" /><path d="M8 8L1.500 4.300A7.500 7.500 0 0 1 14.500 4.300z" fill="#df4336" /><path d="M8 8L1.500 4.300A7.500 7.500 0 0 0 7.500 15.500z" fill="#2d9f51" /><circle cx="8" cy="8" r="3.800" fill="#fff" /><circle cx="8" cy="8" r="2.800" fill="#3578df" /></Pic> },
  { name: 'Fusion 360', active: true, art: <FusionMark size={18} /> },
  { name: 'Paint', running: true, art: <Pic><path d="M8 1c5 0 8 4 7 8-1 3-4 0-5 2s0 4-3 4-6-3-6-7 3-7 7-7z" fill="#2a9bd1" /><circle cx="5" cy="5" r="1.300" fill="#f3cc55" /><circle cx="9" cy="4" r="1.300" fill="#e65b4d" /><circle cx="4" cy="9" r="1.300" fill="#6fd06b" /><path d="M13 3l1.500 1L12 15h-2z" fill="#b06a2f" /></Pic> },
];

export default function App() {
  return (
    <>
      <GlobalStyle />
      <Shell>
        <TitleBar>
          <FusionMark size={10} />
          <AppTitle>Autodesk Fusion 360 (Education License)</AppTitle>
          <WindowButtons>
            <WindowButton aria-label="Minimize"><Art size={8}><path d="M1 6h10" fill="none" stroke="#333" strokeWidth="1.300" /></Art></WindowButton>
            <WindowButton aria-label="Restore"><Art size={8}><path d="M2 4h6v6H2zM4 4V2h6v6H8" fill="none" stroke="#333" strokeWidth="1.500" /></Art></WindowButton>
            <WindowButton aria-label="Close"><Art size={8}><path d="M1.500 1.500l9 9M10.500 1.500l-9 9" stroke="#333" strokeWidth="1.500" /></Art></WindowButton>
          </WindowButtons>
        </TitleBar>

        <TabStrip>
          <QuickBar>
            <QuickButton $w={16} aria-label="Data panel"><Art size={9}><path d="M0 0h3v3H0zM4.500 0h3v3h-3zM9 0h3v3H9zM0 4.500h3v3H0zM4.500 4.500h3v3h-3zM9 4.500h3v3H9zM0 9h3v3H0zM4.500 9h3v3h-3zM9 9h3v3H9z" fill="currentColor" /></Art></QuickButton>
            <QuickButton $w={31} aria-label="File"><Art size={10}><path d="M1 0h6l4 4v8H1z" fill="currentColor" /><path d="M7 0v4h4" stroke="#ccc" fill="none" /></Art><Caret /></QuickButton>
            <QuickButton $w={19} $dim aria-label="Save"><Art size={9}><path d="M1 1h10v10H1zM3 1v4h6V1M3 11V7h6v4" fill="none" stroke="currentColor" strokeWidth="1.500" /></Art></QuickButton>
            <QuickButton $w={28} $dim aria-label="Undo"><Art size={9}><path d="M5 1L1 5l4 4M1 5h6c3 0 4 3 4 6" fill="none" stroke="currentColor" strokeWidth="1.700" /></Art><Caret /></QuickButton>
            <QuickButton $w={22} $dim aria-label="Redo"><Art size={9}><path d="M7 1l4 4-4 4M11 5H5c-3 0-4 3-4 6" fill="none" stroke="currentColor" strokeWidth="1.700" /></Art><Caret /></QuickButton>
          </QuickBar>
          <DocumentTab>
            <DocumentName>
              <Art size={10}><path d="M0 2l6-2 6 2v6l-6 4-6-4z" fill="#555" /><path d="M0 2l4 2v7L0 8z" fill="#8b8b8b" /><path d="M0 2l6-2 6 2-8 2z" fill="#777" /></Art>
              Boeing 7478F eto yung tama v11
            </DocumentName>
            <CloseTab aria-label="Close document"><Art size={7}><path d="M1 1l10 10M11 1L1 11" stroke="currentColor" strokeWidth="1.600" /></Art></CloseTab>
          </DocumentTab>
          <AccountBar>
            <AccountButton $w={17} $tab aria-label="New design"><Art size={9}><path d="M6 1v10M1 6h10" stroke="#777" strokeWidth="2.200" /></Art></AccountButton>
            <AccountButton $w={24} aria-label="Extensions"><Art size={10}><circle cx="6" cy="6" r="4.800" fill="none" stroke="currentColor" strokeWidth="2" /><path d="M2 1l4 5 3-4" fill="none" stroke="currentColor" strokeWidth="2" /></Art></AccountButton>
            <AccountButton $w={18} aria-label="Job status"><Art size={10}><circle cx="6" cy="6" r="5.500" fill="currentColor" /><path d="M6 3v3h3" fill="none" stroke="#ccc" strokeWidth="1.300" /></Art></AccountButton>
            <AccountButton $w={22} aria-label="Notifications"><Art size={10}><path d="M1 9l2-2V4c0-4 6-4 6 0v3l2 2zM4 10h4l-2 2z" fill="currentColor" /><circle cx="9.500" cy="2.500" r="2.500" fill="#168bd3" /></Art></AccountButton>
            <AccountButton $w={20} aria-label="Help"><Art size={11}><circle cx="6" cy="6" r="5.700" fill="currentColor" /><path d="M4.200 4.700c0-2.500 3.700-2.300 3.700 0C7.900 6 6 6 6 7.500M6 8.600v1.200" fill="none" stroke="#eee" strokeWidth="1.300" /></Art></AccountButton>
            <Avatar>JM</Avatar>
          </AccountBar>
        </TabStrip>

        <Ribbon>
          <WorkspaceButton>DESIGN <Caret /></WorkspaceButton>
          <RibbonBody>
            <RibbonTabs>
              {ribbonTabs.map((t, i) => (
                <RibbonTab key={t.name} $w={t.w} $active={i === 0}>{t.name}</RibbonTab>
              ))}
            </RibbonTabs>
            <Groups>
              {groups.map((g) => (
                <Group key={g.name} $w={g.w}>
                  <GroupTools>
                    {g.tools.map((t) => (
                      <ToolButton key={t} $selected={t === 'select'} aria-label={t}><Glyph name={t} size={20} /></ToolButton>
                    ))}
                  </GroupTools>
                  <GroupLabel>{g.name}<Caret /></GroupLabel>
                </Group>
              ))}
            </Groups>
          </RibbonBody>
        </Ribbon>

        <Viewport>
          <Aircraft />
          <Browser>
            <PanelHead>
              <PanelArrow aria-label="Collapse browser"><Art size={6}><path d="M6 2v8L0 6zM12 2v8L6 6z" fill="#333" /></Art></PanelArrow>
              <PanelTitle>BROWSER</PanelTitle>
              <PanelToggle aria-label="Hide browser"><Art size={6}><circle cx="6" cy="6" r="6" fill="#222" /><path d="M3 6h6" stroke="#aaa" strokeWidth="1.500" /></Art></PanelToggle>
              <Grip />
            </PanelHead>
            <TreeRow>
              <TreeButton $w={13} aria-label="Expand"><Art size={10}><path d="M2 1v10l7-5z" fill="#fff" stroke="#333" strokeWidth="1.200" /></Art></TreeButton>
              <TreeButton $w={16} $shade aria-label="Visibility"><Art size={10}><path d="M0 6c3-5 9-5 12 0-3 5-9 5-12 0z" fill="#ccc" stroke="#888" /><circle cx="6" cy="6" r="2.500" fill="#777" /></Art></TreeButton>
              <TreeItem>
                <Art size={10}><path d="M0 1h5l1 2v8H0z" fill="#eee" /><path d="M5 5l3-1 4 1v6H5z" fill="#fff" stroke="#777" /></Art>
                Boeing 7478F eto yung tama v...
              </TreeItem>
              <TreeButton $w={15} $shade aria-label="Activate component"><Art size={9}><circle cx="6" cy="6" r="5" fill="#fff" stroke="#444" strokeWidth="1.200" /><circle cx="6" cy="6" r="2" fill="#333" /></Art></TreeButton>
            </TreeRow>
          </Browser>
          <ViewCube>
            <Axis $x={33} $y={1} $c="#8f8fff">Z</Axis>
            <Axis $x={2} $y={32} $c="#ff8f8f">X</Axis>
            <Axis $x={37} $y={35} $c="#5bea5b">Y</Axis>
            <CubeFace>BACK</CubeFace>
          </ViewCube>
          <BottomRow>
            <PanelHead>
              <PanelArrow as="span" />
              <PanelTitle>COMMENTS</PanelTitle>
              <PanelToggle aria-label="Show comments"><Art size={6}><circle cx="6" cy="6" r="6" fill="#222" /><path d="M3 6h6M6 3v6" stroke="#ddd" strokeWidth="1.500" /></Art></PanelToggle>
              <Grip />
            </PanelHead>
            <NavBar aria-label="Navigation">
              {navTools.map((n) => (
                <NavButton key={n.name} $w={n.w} aria-label={n.name}><Art size={11}>{n.art}</Art>{n.caret && <Caret />}</NavButton>
              ))}
            </NavBar>
          </BottomRow>
        </Viewport>

        <Timeline>
          <ScrollThumb />
          <Playback>
            {playback.map((p) => (
              <PlayButton key={p.name} aria-label={p.name}><Art size={10}><path d={p.d} fill="#333" stroke="#333" strokeWidth="1" /></Art></PlayButton>
            ))}
          </Playback>
          <Features>
            {features.map((f, i) => (
              <Feature key={i}><FeatureButton aria-label={`${f} ${i + 1}`}><Glyph name={f} size={10} /></FeatureButton></Feature>
            ))}
          </Features>
          <SettingsButton aria-label="Timeline settings">
            <Art size={11}><circle cx="6" cy="6" r="3.200" fill="none" stroke="#888" strokeWidth="2.300" /><circle cx="6" cy="6" r="5" fill="none" stroke="#888" strokeWidth="1.700" strokeDasharray="2 1.930" /></Art>
          </SettingsButton>
        </Timeline>

        <Taskbar>
          <Weather>
            <svg width="16" height="14" viewBox="0 0 16 14" aria-hidden="true">
              <path d="M4 12a3.500 3.500 0 0 1 0-7 4.500 4.500 0 0 1 8.500 0A3.500 3.500 0 0 1 12 12z" fill="#a9c7f1" stroke="#7ba3dc" strokeWidth=".7" />
              <path d="M2 9c2-2 4-2 6 0" fill="none" stroke="#dce9fb" />
            </svg>
            <span><Line>30°C</Line><Line $muted>Cloudy</Line></span>
          </Weather>
          <Apps>
            {apps.map((a) => (
              <AppButton key={a.name} aria-label={a.name} $active={a.active} $running={a.running}>{a.art}</AppButton>
            ))}
          </Apps>
          <Tray>
            <TrayButton $w={15} aria-label="Show hidden icons"><Art size={9}><path d="M1 8l5-5 5 5" fill="none" stroke="#333" strokeWidth="1.300" /></Art></TrayButton>
            <TrayButton $w={16} aria-label="OneDrive"><Art size={11}><path d="M2 10c-3-3 0-6 2-5 2-4 7-2 6 1 3 2 1 4 0 4z" fill="#777" stroke="#333" /><path d="M3 8l4-2 4 2v2H2z" fill="#ddd" /></Art></TrayButton>
            <TrayButton $w={27}><Line>ENG</Line><Line>US</Line></TrayButton>
            <TrayButton $w={20} aria-label="Wi-Fi"><Art size={9}><path d="M1 5c3-3.500 7-3.500 10 0M2.500 7c2-2.500 5-2.500 7 0M4.500 9c1-1 2-1 3 0" fill="none" stroke="#333" strokeWidth="1.200" /></Art></TrayButton>
            <TrayButton $w={12} aria-label="Volume"><Art size={9}><path d="M1 4h2l3-3v10L3 8H1zM8 4c1 1 1 3 0 4M10 2c2 2 2 6 0 8" fill="none" stroke="#333" /></Art></TrayButton>
            <TrayButton $w={18} aria-label="Battery"><Art size={11}><path d="M1 3h9v6H1zM10 5h2v2h-2" fill="#fff" stroke="#222" /><path d="M2 4h3v4H2z" fill="#222" /></Art></TrayButton>
            <TrayButton $w={44} $right><Line>11:23 am</Line><Line>05/10/2022</Line></TrayButton>
          </Tray>
        </Taskbar>
      </Shell>
    </>
  );
}
